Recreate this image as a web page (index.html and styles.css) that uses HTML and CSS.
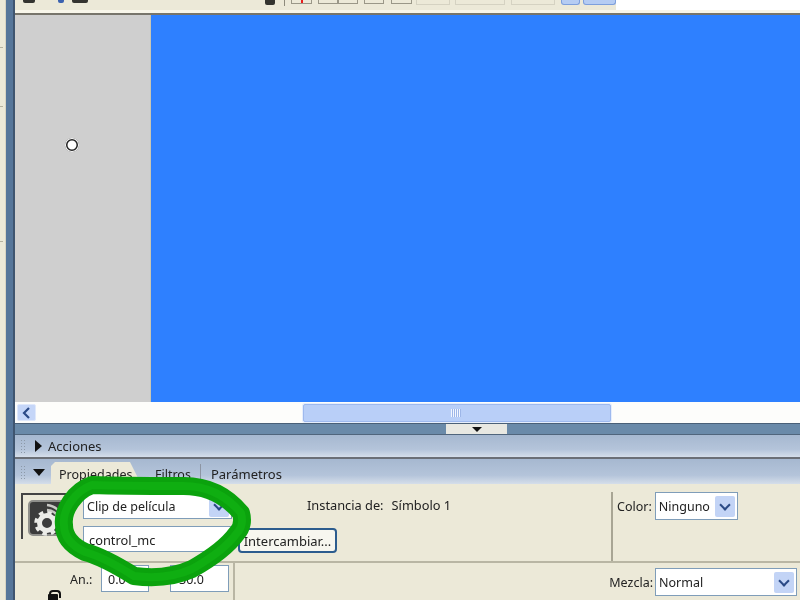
FILE: index.html
```html
<!DOCTYPE html>
<html lang="es">
<head>
<meta charset="utf-8">
<title>Propiedades</title>
<link rel="stylesheet" href="styles.css">
</head>
<body>
<div class="app">
  <div class="rail"></div>
  <div class="rail-blue"></div>
  <div class="main">
    <div class="toolbar">
      <div class="tools">
        <i class="tool dark t1"></i><i class="tool bluey t2"></i><i class="tool dark t3"></i>
        <i class="tool dark t4"></i><i class="sep"></i>
        <i class="btn b1"><b class="red"></b></i><i class="btn b2"></i><i class="btn b2 tight"></i>
        <i class="btn b2"></i><i class="btn b2 wide"></i>
        <i class="btn b3"></i><i class="btn b4"></i><i class="btn b5"></i>
        <i class="blue-btn bb1"></i><i class="blue-btn bb2"></i>
        <div class="tools-white"></div>
      </div>
    </div>
    <div class="stage">
      <div class="pasteboard"><span class="reg"></span></div>
      <div class="canvas"></div>
    </div>
    <div class="hscroll">
      <span class="arrow-btn"><svg width="12" height="12" viewBox="0 0 12 12"><path d="M8 1 3 6l5 5" fill="none" stroke="#2b4a86" stroke-width="2.200"/></svg></span>
      <span class="thumb"><i class="grip"></i></span>
    </div>
    <div class="splitter"><span class="split-tab"><i class="tri-down"></i></span></div>
    <div class="panel-head acciones">
      <i class="dots"></i><i class="tri-right"></i><span>Acciones</span>
    </div>
    <div class="panel-head tabs">
      <i class="dots"></i><i class="tri-down big"></i>
      <span class="tab active">Propiedades</span>
      <span class="tab filtros">Filtros</span>
      <span class="tab last">Parámetros</span>
    </div>
    <div class="props">
      <div class="row-top">
        <div class="symbol-cell">
          <div class="symbol">
            <svg width="38" height="36" viewBox="0 0 38 36">
              <rect x="1" y="1" width="36" height="34" rx="4" fill="#3c3c3c" stroke="#8f8f8b" stroke-width="2"/>
              <circle cx="19" cy="23" r="7.500" fill="none" stroke="#ecece8" stroke-width="5"/>
              <circle cx="19" cy="23" r="11" fill="none" stroke="#ecece8" stroke-width="3.500" stroke-dasharray="4.500 4.140"/>
              <path d="M19 5a18 18 0 0 1 16 14M19 10a13 13 0 0 1 12 9" fill="none" stroke="#c9c9c5" stroke-width="2.500"/>
            </svg>
          </div>
          <div class="fields">
            <div class="field select-field"><span>Clip de película</span><i class="drop"></i></div>
            <div class="field"><span class="name">control_mc</span></div>
          </div>
        </div>
        <div class="instance">
          <div class="instance-text"><span>Instancia de:</span><span>Símbolo 1</span></div>
          <button class="swap">Intercambiar...</button>
        </div>
        <div class="color-cell">
          <span class="lbl">Color:</span>
          <div class="field select-field color-select"><span>Ninguno</span><i class="drop"></i></div>
        </div>
      </div>
      <div class="row-bottom">
        <div class="size-cell">
          <i class="lock"></i>
          <span class="lbl an">An.:</span>
          <div class="field size s1"><span>0.0</span></div>
          <div class="field size s2"><span>30.0</span></div>
          <div class="field size s1 next"></div>
          <div class="field size s2"></div>
        </div>
        <div class="blend-cell">
          <span class="lbl">Mezcla:</span>
          <div class="field select-field blend-select"><span>Normal</span><i class="drop"></i></div>
        </div>
      </div>
    </div>
  </div>
</div>
<svg class="marker" width="800" height="600" viewBox="0 0 800 600">
  <path class="ink" d="M92 485C120 486 150 486 180 486C205 485 226 495 241 513C243 520 242 528 237 533C227 547 208 560 192 569C172 578 150 578 134 576C118 566 100 556 85 552C70 545 64 535 64 525C62 510 75 491 92 485Z"/>
  <path class="ink-core" d="M92 485C120 486 150 486 180 486C205 485 226 495 241 513C243 520 242 528 237 533C227 547 208 560 192 569C172 578 150 578 134 576C118 566 100 556 85 552C70 545 64 535 64 525C62 510 75 491 92 485Z"/>
</svg>
</body>
</html>
```
FILE: styles.css
```css
* { box-sizing: border-box; }
html, body { margin: 0; padding: 0; }
body { width: 800px; height: 600px; overflow: hidden; position: relative; font-family: "Noto Sans", "Open Sans", sans-serif; font-size: 12.5px; color: #222; background: #ece9d8; }
i { display: block; font-style: normal; }
.app { display: flex; width: 800px; height: 600px; overflow: hidden; filter: blur(0.35px); }
.rail { width: 6px; flex: none; border-right: 1px solid #d8d4c2; background-color: #ece9d8; background-image: linear-gradient(#b5b2a0, #b5b2a0), linear-gradient(#b5b2a0, #b5b2a0), linear-gradient(#b5b2a0, #b5b2a0); background-size: 3px 1px; background-repeat: no-repeat; background-position: 0 47px, 0 106px, 0 241px; }
.rail-blue { width: 9px; background: #56769a; border-right: 2px solid #3f5570; flex: none; }
.main { flex: 1; min-width: 0; display: flex; flex-direction: column; }

.toolbar { height: 15px; flex: none; background: #ece9d8; border-bottom: 2px solid #77756b; box-shadow: inset 0 -3px 0 #f8f6ea; }
.tools { display: flex; height: 10px; align-items: flex-start; }
.tool { height: 3px; border-radius: 0 0 2px 2px; flex: none; }
.dark { background: #33332f; }
.bluey { background: #3c62b0; }
.t1 { width: 12px; margin-left: 8px; }
.t2 { width: 6px; margin-left: 23px; }
.t3 { width: 16px; margin-left: 8px; }
.t4 { width: 10px; margin-left: 177px; height: 5px; }
.sep { width: 1px; height: 6px; background: #8d8a7c; margin-left: 9px; flex: none; }
.btn { height: 4px; border: 1px solid #9a9788; border-top: 0; background: #ece9d8; flex: none; }
.b1 { width: 21px; margin-left: 6px; }
.red { display: block; width: 2px; height: 3px; background: #e81c1c; margin: 0 auto; }
.b2 { width: 20px; margin-left: 6px; }
.b2.tight { margin-left: 0; }
.b2.wide { width: 21px; margin-left: 7px; }
.b3 { width: 34px; margin-left: 4px; height: 5px; border-color: #d5d2c2; }
.b4 { width: 50px; margin-left: 5px; height: 5px; border-color: #d5d2c2; }
.b5 { width: 44px; margin-left: 6px; height: 5px; border-color: #d5d2c2; }
.blue-btn { height: 5px; background: #b5ccf3; border: 1px solid #7d9fdc; border-top: 0; border-radius: 0 0 3px 3px; flex: none; }
.bb1 { width: 19px; margin-left: 6px; }
.bb2 { width: 33px; margin-left: 3px; }
.tools-white { flex: 1; height: 10px; background: #fff; }

.stage { height: 387px; flex: none; display: flex; }
.pasteboard { width: 136px; flex: none; background: #cfcfcf; border-right: 1px solid #c9c6b4; padding: 123px 0 0 50px; }
.reg { display: block; width: 14px; height: 14px; border-radius: 50%; background: #fff; box-shadow: inset 0 0 0 1px #fff, inset 0 0 0 2.500px #222; }
.canvas { flex: 1; background: #2e80ff; }

.hscroll { height: 21px; flex: none; background: #fdfdfb; display: flex; align-items: center; padding-left: 2px; }
.arrow-btn { width: 19px; height: 17px; background: #c5d6f8; border: 1px solid #dfe8fb; display: flex; align-items: center; justify-content: center; border-radius: 2px; flex: none; }
.thumb { width: 308px; height: 18px; margin-left: 267px; background: #b9cff8; border: 1px solid #9eb9ee; border-radius: 2px; box-shadow: 0 0 0 1px #e6eefc; display: flex; align-items: center; justify-content: center; flex: none; padding-right: 2px; }
.grip { width: 10px; height: 8px; background: repeating-linear-gradient(90deg, #f2f6ff 0 1px, #9db6e8 1px 2px); }

.splitter { height: 12px; flex: none; background: #6a8aa9; border-top: 1px solid #4a6078; border-bottom: 1px solid #50657c; display: flex; }
.split-tab { width: 61px; height: 10px; margin-left: 431px; background: #e8e8e2; display: flex; align-items: center; justify-content: center; }
.tri-down { width: 0; height: 0; border: 5px solid transparent; border-top-color: #111; border-bottom-width: 0; }
.tri-down.big { border-width: 7px 6px 0; border-top-color: #111; margin: 1px 0 0 7px; }
.tri-right { width: 0; height: 0; border: 6px solid transparent; border-left: 7px solid #111; border-right-width: 0; margin-left: 9px; }
.dots { width: 6px; height: 14px; margin-left: 5px; background: radial-gradient(circle, #8c99a8 0.7px, transparent 1px) 0 0 / 3px 3px; }

.panel-head { flex: none; display: flex; align-items: center; background: linear-gradient(#a6b8d0, #b4c4da 65%, #d5deea); }
.acciones { height: 24px; border-bottom: 2px solid #6b6f76; font-size: 13px; }
.acciones span { margin-left: 6px; }
.tabs { height: 25px; align-items: flex-end; }
.tabs > .dots, .tabs > .tri-down { align-self: center; }
.tab { height: 22px; line-height: 25px; }
.tab.active { margin-left: 6px; width: 90px; padding-left: 8px; background: #ece9d8; clip-path: polygon(0 100%, 0 4px, 4px 0, 79px 0, 90px 100%); }
.tab.filtros { margin-left: 4px; padding: 0 9px 0 10px; height: 19px; margin-bottom: 1px; line-height: 21px; border-right: 1px solid #8d95a3; }
.tab.last { padding-left: 10px; font-size: 13px; }

.props { flex: 1; min-height: 0; background: #ece9d8; display: flex; flex-direction: column; }
.row-top { height: 79px; flex: none; display: flex; border-bottom: 2px solid #b9b6a4; }
.symbol-cell { width: 220px; flex: none; display: flex; padding: 9px 0 0 6px; }
.symbol { width: 62px; height: 46px; flex: none; padding: 5px 0 0 5px; border-left: 2px solid #444; border-top: 2px solid #444; }
.fields { display: flex; flex-direction: column; gap: 7px; width: 149px; }
.field { height: 26px; background: #fff; border: 1.5px solid #7f9db9; display: flex; align-items: center; padding: 1px 0 0 3px; justify-content: space-between; color: #222; }
.select-field { padding-right: 2px; }
.name { padding-left: 2px; font-size: 12.8px; }
.drop { width: 20px; height: 21px; margin-top: -1px; border-radius: 2px; background: #c3d4f6; position: relative; flex: none; }
.drop::after { content: ""; position: absolute; left: 6px; top: 5px; width: 6px; height: 6px; border-right: 2px solid #2b4a86; border-bottom: 2px solid #2b4a86; transform: rotate(45deg); }
.instance { width: 376px; flex: none; padding: 0 0 0 3px; }
.instance-text { margin: 12px 0 0 69px; display: flex; gap: 8px; font-size: 12.8px; }
.swap { display: block; margin-top: 14px; width: 99px; height: 25px; background: #f7f6ef; border: 2px solid #2c5c8e; border-radius: 4px; font: inherit; font-size: 13px; color: #222; padding: 1px 0 0; }
.color-cell { flex: 1; border-left: 2px solid #a8a594; margin-top: 8px; display: flex; align-items: flex-start; padding-left: 4px; gap: 3px; }
.lbl { line-height: 30px; }
.color-select { width: 83px; height: 28px; }
.row-bottom { flex: 1; min-height: 0; display: flex; justify-content: space-between; }
.size-cell { width: 220px; flex: none; border-right: 2px solid #b9b6a4; display: flex; flex-wrap: wrap; align-content: flex-start; row-gap: 7px; padding-top: 2px; position: relative; }
.an { margin-left: 55px; width: 31px; }
.lock { width: 10px; height: 7px; background: #111; border-radius: 1px; position: absolute; left: 33px; top: 31px; }
.lock::before { content: ""; position: absolute; left: 1px; top: -4px; width: 8px; height: 6px; border: 2px solid #111; border-bottom: 0; border-radius: 4px 4px 0 0; }
.size { height: 27px; flex: none; }
.s1 { width: 48px; padding-left: 6px; justify-content: flex-start; }
.s1.next { margin-left: 86px; }
.s2 { width: 59px; margin-left: 21px; padding-left: 8px; justify-content: flex-start; }
.blend-cell { display: flex; align-items: flex-start; padding: 5px 3px 0 0; gap: 2px; }
.blend-select { width: 142px; height: 28px; }

.marker { position: absolute; left: 0; top: 0; pointer-events: none; }
.ink { fill: none; stroke: #0ba20d; stroke-width: 18; stroke-linejoin: round; }
.ink-core { fill: none; stroke: #0fae11; stroke-width: 8; stroke-linejoin: round; }
```
